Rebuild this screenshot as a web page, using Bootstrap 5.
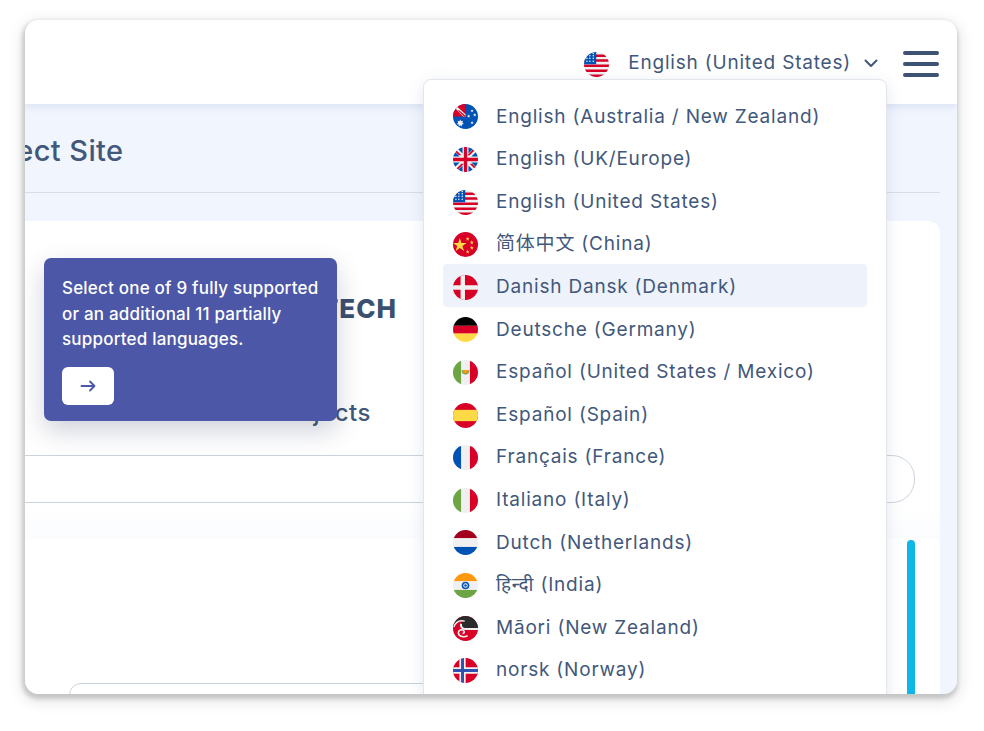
<!DOCTYPE html>
<html lang="en">
  <head>
    <meta charset="UTF-8" />
    <title>Select Site</title>
    <link href="https://cdn.jsdelivr.net/npm/bootstrap@5.3.3/dist/css/bootstrap.min.css" rel="stylesheet" />
    <style>
      html, body { height: 100%; background: #fff; overflow: hidden; }
      body { font-family: "Inter", "Noto Sans CJK SC", "Noto Sans", sans-serif; color: #42587a; }
      .frame-wrap { width: 932px; height: 674px; margin: 20px 0 0 25px; border-radius: 14px; box-shadow: -1px 3px 4px 2px rgba(0,0,0,.17), 0 5px 14px 5px rgba(0,0,0,.08); }
      .app-frame { position: relative; height: 674px; border-radius: 14px; overflow: hidden; background: #f1f5fd; }
      .top-bar { height: 84px; padding-right: 18px; background: #fff; box-shadow: 0 2px 8px rgba(120,145,200,.22); position: relative; }
      .lang-text { font-size: 19px; letter-spacing: .8px; margin: 3px 13px 0 19px; white-space: nowrap; }
      .flag { width: 25px; height: 25px; border-radius: 50%; flex: none; }
      .top-bar > .flag { margin-top: 5px; }
      .top-bar > .chevron { margin-top: 3px; }
      .burger { width: 36px; gap: 7px; margin-left: 25px; margin-top: 4px; }
      .burger span { height: 4px; border-radius: 2px; background: #3e5273; }
      .page-area { padding-right: 17px; }
      .title-row { height: 89px; padding-top: 6px; border-bottom: 1px solid #d9dde5; margin-bottom: 28px; }
      .title-row h1 { font-size: 29px; font-weight: 500; letter-spacing: .4px; margin: 0 0 0 -53px; color: #42587a; }
      .site-card { background: #fff; border-radius: 12px 12px 0 0; height: 480px; margin-left: -20px; padding-left: 20px; }
      .logo-row { width: 372px; height: 174px; padding-top: 73px; text-align: right; font-size: 26px; font-weight: 800; letter-spacing: 1px; color: #3b4f6e; line-height: 30px; }
      .projects-row { width: 346px; height: 60px; padding-top: 3px; text-align: right; font-size: 24px; font-weight: 500; letter-spacing: .5px; color: #42587a; line-height: 30px; }
      .search-pill { height: 48px; width: 910px; margin-left: -20px; border: 1px solid #ccd3dd; border-radius: 0 23px 23px 0; background: #fff; }
      .list-tint { height: 36px; background: linear-gradient(#fff, #fbfcfe); }
      .lower-row { width: 890px; }
      .field-box { margin: 144px 0 0 44px; width: 700px; height: 60px; border: 1px solid #c8d1de; border-radius: 12px; }
      .scroll-thumb { width: 8px; height: 300px; margin-top: 1px; background: #0db8e6; border-radius: 4px 4px 0 0; }
      .lang-menu.dropdown-menu { display: block; top: 59px; left: 398px; width: 464px; height: 640px; padding: 13.6px 19px; border: 1px solid #e2e5ea; border-radius: 8px; box-shadow: 0 4px 16px rgba(80,100,160,.15); margin: 0; }
      .lang-menu .dropdown-item { height: 42.6px; padding: 4px 10px 0; gap: 18px; font-size: 19px; letter-spacing: .8px; color: #42587a; border-radius: 4px; }
      .lang-menu .dropdown-item.active { background: #eef2fb; color: #42587a; }
      .tour-tip { position: absolute; top: 238px; left: 19px; width: 293px; height: 163px; padding: 18px 18px; background: #4c57a7; border-radius: 7px; color: #fff; font-size: 17px; font-weight: 500; letter-spacing: .2px; line-height: 25.5px; box-shadow: 0 10px 26px rgba(40,50,90,.22); }
      .tour-next { width: 52px; height: 38px; margin-top: 14px; padding: 0; background: #fff; border: 0; border-radius: 6px; color: #4c57a7; }
    </style>
  </head>
  <body>
    <svg width="0" height="0" class="d-none">
      <defs>
        <symbol id="f-au" viewBox="0 0 512 512">
          <rect width="512" height="512" fill="#0052b4"/>
          <path d="M0 0h256v256H0z" fill="#d80027"/>
          <path d="M70 40l186 170v46h-50L40 80z" fill="#f0f0f0"/>
          <path d="M120 125l136 115v16h-30L105 140z" fill="#d80027"/>
          <path d="M150 315l18 40 42-10-19 38 34 27-42 9 0 43-33-27-34 27 1-43-43-9 34-27-19-38 42 10z" fill="#f0f0f0"/>
          <path d="M390 105l10 22 24 2-18 16 6 24-22-13-21 13 6-24-18-16 24-2zM320 215l10 22 24 2-18 16 6 24-22-13-21 13 6-24-18-16 24-2zM445 190l10 22 24 2-18 16 6 24-22-13-21 13 6-24-18-16 24-2zM390 350l10 22 24 2-18 16 6 24-22-13-21 13 6-24-18-16 24-2z" fill="#f0f0f0"/>
        </symbol>
        <symbol id="f-gb" viewBox="0 0 512 512">
          <rect width="512" height="512" fill="#f0f0f0"/>
          <path d="M60 0h135v135L60 0zM317 0h135L317 135zM0 60l135 135H0zM512 60v135H377zM0 317h135L0 452zM512 317v135L377 317zM195 512H60l135-135zM317 512V377l135 135z" fill="#0052b4"/>
          <path d="M222 0h68v222h222v68H290v222h-68V290H0v-68h222z" fill="#d80027"/>
          <path d="M0 0l170 170h-50L0 50zM512 0L342 170h-50L462 0zM0 512l170-170h50L50 512zM512 512L342 342h50l120 120z" fill="#d80027"/>
        </symbol>
        <symbol id="f-us" viewBox="0 0 512 512">
          <rect width="512" height="512" fill="#f0f0f0"/>
          <path d="M0 50h512v50H0zM0 150h512v50H0zM0 258h512v50H0zM0 360h512v50H0zM0 462h512v50H0z" fill="#d80027"/>
          <path d="M0 0h250v250H0z" fill="#0052b4"/>
          <g fill="#f0f0f0"><circle cx="190" cy="30" r="16"/><circle cx="120" cy="75" r="16"/><circle cx="190" cy="75" r="16"/><circle cx="60" cy="130" r="16"/><circle cx="120" cy="130" r="16"/><circle cx="190" cy="130" r="16"/><circle cx="60" cy="190" r="16"/><circle cx="120" cy="190" r="16"/><circle cx="190" cy="190" r="16"/></g>
        </symbol>
        <symbol id="f-cn" viewBox="0 0 512 512">
          <rect width="512" height="512" fill="#d80027"/>
          <path d="M140 125l33 101h106l-86 62 33 101-86-62-86 62 33-101-86-62h106z" fill="#ffda44"/>
          <path d="M300 95l10 32h32l-26 19 10 31-26-19-26 19 10-31-26-19h32zM385 170l10 32h32l-26 19 10 31-26-19-26 19 10-31-26-19h32zM385 280l10 32h32l-26 19 10 31-26-19-26 19 10-31-26-19h32zM300 360l10 32h32l-26 19 10 31-26-19-26 19 10-31-26-19h32z" fill="#ffda44"/>
        </symbol>
        <symbol id="f-dk" viewBox="0 0 512 512">
          <rect width="512" height="512" fill="#d80027"/>
          <path d="M155 0h90v211h267v90H245v211h-90V301H0v-90h155z" fill="#f0f0f0"/>
        </symbol>
        <symbol id="f-de" viewBox="0 0 512 512">
          <rect width="512" height="180" fill="#000"/>
          <rect y="180" width="512" height="160" fill="#d80027"/>
          <rect y="340" width="512" height="172" fill="#ffda44"/>
        </symbol>
        <symbol id="f-mx" viewBox="0 0 512 512">
          <rect width="512" height="512" fill="#f0f0f0"/>
          <rect width="165" height="512" fill="#6da544"/>
          <rect x="347" width="165" height="512" fill="#d80027"/>
          <path d="M175 210h162c0 60-40 85-81 85s-81-25-81-85z" fill="#6da544"/>
          <path d="M195 205h122c0 45-30 65-61 65s-61-20-61-65z" fill="#ff9811"/>
        </symbol>
        <symbol id="f-es" viewBox="0 0 512 512">
          <rect width="512" height="512" fill="#d80027"/>
          <rect y="140" width="512" height="232" fill="#ffda44"/>
        </symbol>
        <symbol id="f-fr" viewBox="0 0 512 512">
          <rect width="512" height="512" fill="#f0f0f0"/>
          <rect width="165" height="512" fill="#0052b4"/>
          <rect x="347" width="165" height="512" fill="#d80027"/>
        </symbol>
        <symbol id="f-it" viewBox="0 0 512 512">
          <rect width="512" height="512" fill="#f0f0f0"/>
          <rect width="165" height="512" fill="#6da544"/>
          <rect x="347" width="165" height="512" fill="#d80027"/>
        </symbol>
        <symbol id="f-nl" viewBox="0 0 512 512">
          <rect width="512" height="512" fill="#f0f0f0"/>
          <rect width="512" height="165" fill="#a2001d"/>
          <rect y="347" width="512" height="165" fill="#0052b4"/>
        </symbol>
        <symbol id="f-in" viewBox="0 0 512 512">
          <rect width="512" height="512" fill="#f0f0f0"/>
          <rect width="512" height="165" fill="#ff9811"/>
          <rect y="347" width="512" height="165" fill="#6da544"/>
          <circle cx="256" cy="256" r="78" fill="#0052b4"/>
          <circle cx="256" cy="256" r="46" fill="#f0f0f0"/>
          <circle cx="256" cy="256" r="26" fill="#0052b4"/>
        </symbol>
        <symbol id="f-mi" viewBox="0 0 512 512">
          <rect width="512" height="512" fill="#d80027"/>
          <path d="M0 0h512v250H250c-45 0-85-35-85-90 0-30 25-55 70-55C170 60 70 90 20 210L0 220z" fill="#2b2b2b"/>
          <g fill="none" stroke="#f0f0f0">
            <path stroke-width="42" d="M512 268H250C190 268 150 215 165 160"/>
            <path stroke-width="30" d="M15 225C60 110 150 80 240 105"/>
            <path stroke-width="32" d="M300 400C240 440 120 430 110 350c-5-60 70-90 110-50 25 30 5 60-25 55"/>
          </g>
        </symbol>
        <symbol id="f-no" viewBox="0 0 512 512">
          <rect width="512" height="512" fill="#d80027"/>
          <path d="M130 0h130v190h252v132H260v190H130V322H0V190h130z" fill="#f0f0f0"/>
          <path d="M165 0h60v226h287v60H225v226h-60V286H0v-60h165z" fill="#2e52b2"/>
        </symbol>
      </defs>
    </svg>

    <div class="frame-wrap">
      <div class="app-frame">
        <header class="top-bar d-flex align-items-center justify-content-end">
          <svg class="flag"><use href="#f-us"/></svg>
          <span class="lang-text">English (United States)</span>
          <svg class="chevron" width="14" height="9" viewBox="0 0 14 9" fill="none" stroke="#42587a" stroke-width="2" stroke-linecap="round" stroke-linejoin="round"><path d="M1.5 1.5 7 7l5.500-5.500"/></svg>
          <div class="burger d-flex flex-column"><span></span><span></span><span></span></div>
        </header>

        <main class="page-area">
          <div class="title-row d-flex align-items-center">
            <h1>Select Site</h1>
          </div>
          <section class="site-card">
            <div class="logo-row">TECH</div>
            <div class="projects-row">Projects</div>
            <div class="search-pill"></div>
            <div class="list-tint"></div>
            <div class="lower-row d-flex justify-content-between">
              <div class="field-box"></div>
              <div class="scroll-thumb"></div>
            </div>
          </section>
        </main>

        <div class="dropdown-menu lang-menu show">
          <a class="dropdown-item d-flex align-items-center" href="#"><svg class="flag"><use href="#f-au"/></svg>English (Australia / New Zealand)</a>
          <a class="dropdown-item d-flex align-items-center" href="#"><svg class="flag"><use href="#f-gb"/></svg>English (UK/Europe)</a>
          <a class="dropdown-item d-flex align-items-center" href="#"><svg class="flag"><use href="#f-us"/></svg>English (United States)</a>
          <a class="dropdown-item d-flex align-items-center" href="#"><svg class="flag"><use href="#f-cn"/></svg>简体中文 (China)</a>
          <a class="dropdown-item d-flex align-items-center active" href="#"><svg class="flag"><use href="#f-dk"/></svg>Danish Dansk (Denmark)</a>
          <a class="dropdown-item d-flex align-items-center" href="#"><svg class="flag"><use href="#f-de"/></svg>Deutsche (Germany)</a>
          <a class="dropdown-item d-flex align-items-center" href="#"><svg class="flag"><use href="#f-mx"/></svg>Español (United States / Mexico)</a>
          <a class="dropdown-item d-flex align-items-center" href="#"><svg class="flag"><use href="#f-es"/></svg>Español (Spain)</a>
          <a class="dropdown-item d-flex align-items-center" href="#"><svg class="flag"><use href="#f-fr"/></svg>Français (France)</a>
          <a class="dropdown-item d-flex align-items-center" href="#"><svg class="flag"><use href="#f-it"/></svg>Italiano (Italy)</a>
          <a class="dropdown-item d-flex align-items-center" href="#"><svg class="flag"><use href="#f-nl"/></svg>Dutch (Netherlands)</a>
          <a class="dropdown-item d-flex align-items-center" href="#"><svg class="flag"><use href="#f-in"/></svg>हिन्दी (India)</a>
          <a class="dropdown-item d-flex align-items-center" href="#"><svg class="flag"><use href="#f-mi"/></svg>Māori (New Zealand)</a>
          <a class="dropdown-item d-flex align-items-center" href="#"><svg class="flag"><use href="#f-no"/></svg>norsk (Norway)</a>
        </div>

        <div class="tour-tip">
          Select one of 9 fully supported or an additional 11 partially supported languages.
          <button class="tour-next d-flex align-items-center justify-content-center" type="button">
            <svg width="16" height="12" viewBox="0 0 16 12" fill="none" stroke="currentColor" stroke-width="1.8" stroke-linecap="round" stroke-linejoin="round"><path d="M1.500 6h13M10 1.500 14.500 6 10 10.500"/></svg>
          </button>
        </div>
      </div>
    </div>
    <script src="https://cdn.jsdelivr.net/npm/bootstrap@5.3.3/dist/js/bootstrap.bundle.min.js"></script>
  </body>
</html>
